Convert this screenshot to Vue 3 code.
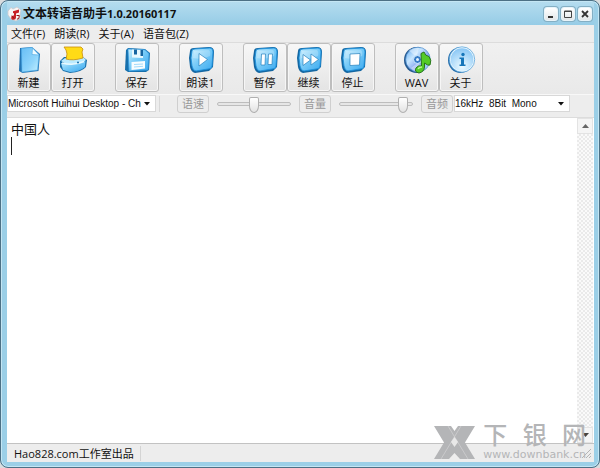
<script setup>
import { ref } from 'vue'

const menus = ['文件(F)', '朗读(R)', '关于(A)', '语音包(Z)']
const groups = [
  [{ icon: 'new', label: '新建' }, { icon: 'open', label: '打开' }],
  [{ icon: 'save', label: '保存' }],
  [{ icon: 'play', label: '朗读1' }],
  [{ icon: 'pause', label: '暂停' }, { icon: 'next', label: '继续' }, { icon: 'stop', label: '停止' }],
  [{ icon: 'wav', label: 'WAV' }, { icon: 'info', label: '关于' }],
]
const tiles = ['play', 'pause', 'next', 'stop']
const content = ref('中国人\n')
const speed = ref(50)
const volume = ref(93)
</script>

<template>
  <div class="window">
    <svg class="defs" width="0" height="0" aria-hidden="true">
      <defs>
        <linearGradient id="blue" x1="0" y1="0" x2="1" y2="1">
          <stop offset="0" stop-color="#c9efff" /><stop offset=".45" stop-color="#7accf8" /><stop offset="1" stop-color="#3aa8ef" />
        </linearGradient>
        <linearGradient id="page" x1="0" y1="0" x2="1" y2="1">
          <stop offset="0" stop-color="#68bff5" /><stop offset=".6" stop-color="#8fd5fb" /><stop offset="1" stop-color="#c4f0ff" />
        </linearGradient>
        <linearGradient id="disc" x1="0" y1="0" x2="1" y2="1">
          <stop offset="0" stop-color="#5fa8ee" /><stop offset=".35" stop-color="#c7e6ff" /><stop offset=".6" stop-color="#8aa9ee" /><stop offset="1" stop-color="#b2e9ff" />
        </linearGradient>
        <radialGradient id="glass" cx=".5" cy=".8" r=".8">
          <stop offset="0" stop-color="#ecfaff" /><stop offset="1" stop-color="#84c4f5" />
        </radialGradient>
      </defs>
    </svg>

    <header class="titlebar">
      <svg class="logo" width="15" height="16" viewBox="0 0 15 16" aria-hidden="true">
        <path d="M1 5 4 1.5 6 3 10 1l4 3-1 5 1 3-5 3-5-2-3-4z" fill="#f7f5f5" stroke="#c9c5c8" stroke-width=".7" />
        <path d="M6 5.2 12 3.6v3L9 7.4v4.2a2.4 2.1 0 1 1-2-2V7L6 7.2z" fill="#c82025" />
        <path d="M9.5 9.5h2.8l-.4 3-2 .7M4.5 10l2.8 2.4" stroke="#941317" fill="none" />
      </svg>
      <h1>文本转语音助手<span class="version">1.0.20160117</span></h1>
      <div class="controls">
        <button type="button" aria-label="最小化"><svg width="12" height="12"><path d="M3 8h5v2H3z" fill="#333" /></svg></button>
        <button type="button" aria-label="最大化"><svg width="12" height="12"><path d="M2.5 3h7v6.500h-7zM2.500 3.500h7" fill="none" stroke="#444" /></svg></button>
        <button type="button" aria-label="关闭"><svg width="12" height="12"><path d="m3 3 6 6M9 3 3 9" stroke="#333" stroke-width="1.800" /></svg></button>
      </div>
    </header>

    <main class="client">
      <nav class="menu">
        <button v-for="m in menus" :key="m" type="button">{{ m }}</button>
      </nav>

      <div class="toolbar">
        <div v-for="(group, g) in groups" :key="g" class="group">
          <button v-for="tool in group" :key="tool.label" type="button" class="tool">
            <svg width="30" height="30" viewBox="0 0 30 30" aria-hidden="true">
              <g v-if="tool.icon === 'new'">
                <path d="M6 3 18 2l8 7-1.500 17-16 2-3.500-2z" fill="#2476b4" />
                <path d="M7.500 3.500 18 2.600 25 9.500 23.500 25 8 27z" fill="url(#page)" stroke="#55b4ef" stroke-width=".6" />
                <path d="M18.500 3 18 9.500l7 .5z" fill="#effbff" stroke="#59aee4" stroke-width=".7" />
              </g>
              <g v-else-if="tool.icon === 'open'">
                <path d="M2 16 6 12 25 12 29 15 28 22Q24 27 12 28L5 26 2 22z" fill="#196faa" />
                <path d="M3 16 7 13 25 12 28 15Q23 21 10 20z" fill="#bcebff" />
                <path d="M8 5 6 2 23 2 25 4 24 7 25 13Q15 16 8 14L9 9z" fill="#ffdb16" stroke="#c98d08" stroke-width=".8" />
                <path d="M3 18Q13 21 27.500 16L27 22Q21 27 12 27L5 25z" fill="url(#blue)" />
                <path d="M4 18Q16 21 26 16.500" fill="none" stroke="#eafaff" stroke-width="1.500" />
                <circle cx="20" cy="17.500" r="1" fill="#186eaa" />
              </g>
              <g v-else-if="tool.icon === 'save'">
                <path d="M4 5 6 3 23 4 28 8 27 25 24 27 6 27 3 25z" fill="#1770ac" />
                <path d="M6 4 23 4.800 27 8.500 26 25 7 26z" fill="url(#blue)" stroke="#329ae0" stroke-width=".7" />
                <path d="M10 4.500 21 5V13L10 12.500z" fill="#e9f8ff" />
                <path d="M12 4.500h3v5h-3zM18.500 5h2.500v6h-2.500z" fill="#1765a2" />
                <path d="M9.500 17 23 16v7.500L9.500 25z" fill="#f7fdff" />
                <path d="M12 19.500 21 19M12 22 21 21.300" stroke="#a3dafa" />
              </g>
              <g v-else-if="tiles.includes(tool.icon)">
                <path d="M4 6Q4 3 8 3L23 2Q28 2 28 7L27 22 23 26 9 28Q5 27 4 22L3 13z" fill="#1467a2" />
                <path d="M6 6Q6 4 9 4L24 3Q27 3 27 7L26 21Q26 24 22 24L10 26Q7 26 6 21L5 13z" fill="url(#blue)" stroke="#1f92dc" stroke-width=".9" />
                <path d="M8 6 23 5Q25 7 24 11 16 15 7 13z" fill="#fff" opacity=".25" />
                <g fill="#fff" stroke="#2681bd" stroke-width=".7">
                  <path v-if="tool.icon === 'play'" d="M13 8.500 21.500 14.500 13 21z" />
                  <path v-if="tool.icon === 'pause'" d="M11.500 9h4l-.5 11h-4zM18.500 9h4L22 19.500h-4z" />
                  <path v-if="tool.icon === 'next'" d="M9 9.500 16.500 15 9 20.500zM17 9 24.500 14.500 17 20z" />
                  <path v-if="tool.icon === 'stop'" d="M12 9 22 8.500 21.500 20 12 20.500z" />
                </g>
              </g>
              <g v-else-if="tool.icon === 'wav'">
                <ellipse cx="14.500" cy="15" rx="12.500" ry="13" fill="#265a91" />
                <circle cx="16" cy="14.500" r="12.300" fill="url(#disc)" stroke="#4c8dcb" stroke-width=".7" />
                <path d="M14.500 12 7 5.500Q12 2 17 3zM17 17 18 26Q12 27 9 23z" fill="#fff" opacity=".4" />
                <circle cx="15.500" cy="14.500" r="4" fill="#367bc6" stroke="#d6efff" />
                <circle cx="15.500" cy="14.500" r="1.500" fill="#e8f6ff" />
                <path d="M19 8.500 22 7Q23 11 27 11.500 30 15 28 20 26 21 22.500 18V22Q22 27 17 28 12 27 14 23 16 20 19.500 21z" fill="#54cb27" stroke="#28751c" />
                <path d="M16 24Q17 22 20 22" fill="none" stroke="#b7f68b" stroke-width="1.500" />
              </g>
              <g v-else>
                <ellipse cx="14.500" cy="15" rx="12.500" ry="13" fill="#286fac" />
                <circle cx="16" cy="14.500" r="12" fill="url(#glass)" stroke="#eaf8ff" stroke-width="1.300" />
                <circle cx="16" cy="14.500" r="12.700" fill="none" stroke="#4a9bd6" stroke-width=".7" />
                <circle cx="17" cy="9.500" r="1.700" fill="#1676ba" />
                <path d="M13.500 12.500h4.500v7h1.500v1.500h-6v-1.500h1.500v-5.500h-1.500z" fill="#1676ba" />
              </g>
            </svg>
            <span>{{ tool.label }}</span>
          </button>
        </div>
      </div>

      <div class="options">
        <div class="combo voice">
          <select aria-label="语音"><option>Microsoft Huihui Desktop - Chinese</option></select>
          <svg width="7" height="4" aria-hidden="true"><path d="M0 0h6L3 3.500z" fill="#111" /></svg>
        </div>
        <i class="divider"></i>
        <div class="sliders">
          <label class="tag" for="speed">语速</label>
          <input id="speed" v-model="speed" type="range" min="0" max="100">
          <label class="tag" for="volume">音量</label>
          <input id="volume" v-model="volume" type="range" min="0" max="100">
          <label class="tag" for="rate">音频</label>
        </div>
        <div class="combo rate">
          <select id="rate"><option>16kHz&nbsp; 8Bit&nbsp; Mono</option></select>
          <svg width="7" height="4" aria-hidden="true"><path d="M0 0h6L3 3.500z" fill="#111" /></svg>
        </div>
      </div>

      <section class="editor">
        <textarea v-model="content" aria-label="文本" spellcheck="false"></textarea>
        <i class="caret"></i>
        <div class="scrollbar">
          <button type="button" aria-label="向上滚动"><svg width="7" height="4"><path d="M0 4h7L3.500 0z" fill="#666" /></svg></button>
          <button type="button" aria-label="向下滚动"><svg width="7" height="4"><path d="M0 0h7L3.500 4z" fill="#444" /></svg></button>
        </div>
      </section>

      <footer class="status">
        <span>Hao828.com工作室出品</span>
        <svg width="11" height="11" aria-hidden="true"><path d="M1 10 10 1M5 10l5-5M8 10l2-2" stroke="#b5b5b5" /></svg>
      </footer>
    </main>

    <div class="watermark">
      <svg width="41" height="33" viewBox="0 0 41 33" aria-hidden="true">
        <path d="M0 0h17l3.500 5L24 0h17L31 16.500 41 33H26l-5.500-6L15 33H0l10-16.500z" />
        <path d="M14 0 34 33M27 0 7 33" stroke="#cfcfd0" stroke-width=".8" />
        <path d="M20.500 11 24 16l-3.500 5L17 16z" fill="#e8e8e8" />
      </svg>
      <div class="brand">
        <div class="name"><span>下</span><span>银</span><span>网</span></div>
        <div class="url">www.downbank.cn</div>
      </div>
    </div>
  </div>
</template>

<style>
body { margin: 0; background: #d9dcde; }
</style>

<style scoped>
* { box-sizing: border-box; }
.window {
  position: relative;
  display: flex;
  flex-direction: column;
  min-height: 100vh;
  padding: 0 5px 5px 6px;
  border: 1px solid #4c7085;
  border-radius: 8px;
  background: #9bcfe7;
  box-shadow: inset 0 0 0 1px #c4e6f4;
  font-family: "Open Sans", "Noto Sans CJK SC", sans-serif;
  font-size: 11px;
  color: #111;
}
.defs { position: absolute; }
button {
  margin: 0;
  padding: 0;
  border: 0;
  background: none;
  font: inherit;
  color: inherit;
}
.titlebar {
  display: flex;
  align-items: center;
  height: 23px;
  background: linear-gradient(#b4dcef, #96cce6);
  margin-top: 1px;
}
h1 {
  flex: 1;
  margin: 0 0 0 1px;
  font-size: 12px;
  font-weight: 700;
  line-height: 16px;
  white-space: nowrap;
}
.version { font-size: 11px; }
.controls { display: flex; gap: 3px; padding-right: 2px; }
.controls button {
  display: flex;
  align-items: center;
  justify-content: center;
  width: 14px;
  height: 14px;
  border: 1px solid #e9f4f9;
  border-radius: 3px;
  background: linear-gradient(#fff, #e3e7e9);
  box-shadow: 0 0 0 1px #84afc4;
}
.controls svg { flex: none; }
.client {
  flex: 1;
  display: flex;
  flex-direction: column;
  background: #ededed;
}
.menu {
  display: flex;
  gap: 9px;
  height: 17px;
  padding: 0 4px;
  line-height: 17px;
}
.toolbar {
  display: flex;
  gap: 20px;
  height: 52px;
  border-top: 1px solid #dcdcdc;
  background: linear-gradient(#f0f0f0, #e9e9e9);
}
.group { display: flex; }
.tool {
  display: flex;
  flex-direction: column;
  align-items: center;
  width: 44px;
  height: 49px;
  padding: 1px 1px 0 0;
  border: 1px solid #bebebe;
  border-radius: 3px;
  background: linear-gradient(#f7f7f7, #e4e4e4);
  box-shadow: inset 0 0 0 1px #f6f6f6;
}
.tool svg { flex: none; }
.tool span { line-height: 16px; }
.options {
  display: flex;
  align-items: center;
  height: 24px;
  padding-bottom: 5px;
  border-top: 1px solid #f8f8f8;
  border-bottom: 1px solid #dcdcdc;
}
.combo {
  display: grid;
  align-items: center;
  height: 17px;
  border: 1px solid #d8d8d8;
  background: #fff;
}
.combo > * { grid-area: 1 / 1; }
.combo svg { justify-self: end; margin-right: 4px; pointer-events: none; }
.combo select {
  width: 100%;
  min-width: 0;
  height: 15px;
  padding: 0 14px 0 0;
  border: 0;
  appearance: none;
  background: none;
  font: 10px/15px "Liberation Sans", sans-serif;
  color: #111;
}
.voice { width: 149px; }
.rate { width: 116px; }
.divider { width: 1px; height: 16px; margin: 0 17px 0 3px; background: #d8d8d8; }
.sliders { display: flex; align-items: center; gap: 8px; margin-right: 1px; }
.tag {
  width: 32px;
  height: 18px;
  border: 1px solid #cfcfcf;
  border-radius: 3px;
  text-align: center;
  line-height: 16px;
  color: #999;
}
input[type="range"] {
  width: 74px;
  height: 17px;
  margin: 0;
  appearance: none;
  background: none;
}
input[type="range"]::-webkit-slider-runnable-track {
  height: 4px;
  border: 1px solid #bdbdbd;
  border-radius: 2px;
  background: #e6e6e6;
}
input[type="range"]::-webkit-slider-thumb {
  appearance: none;
  width: 10px;
  height: 16px;
  margin-top: -6px;
  border: 1px solid #b0b0b0;
  border-radius: 2px 2px 5px 5px / 2px 2px 7px 7px;
  background: linear-gradient(#fff, #e3e3e3);
}
.editor {
  position: relative;
  flex: 1;
  display: flex;
  min-height: 120px;
  padding-right: 1px;
  border-bottom: 1px solid #c2c2c2;
  background: #fff;
}
textarea {
  flex: 1;
  min-width: 0;
  padding: 2px 4px;
  border: 0;
  outline: 0;
  resize: none;
  background: #fff;
  font: 13px/17px "Noto Sans CJK SC", sans-serif;
  color: #111;
}
.caret {
  position: absolute;
  left: 4px;
  top: 19px;
  width: 1px;
  height: 18px;
  background: #222;
}
.scrollbar {
  display: flex;
  flex-direction: column;
  justify-content: space-between;
  width: 16px;
  background: repeating-conic-gradient(#eaeaea 0 25%, #fafafa 0 50%) 0 0 / 4px 4px;
}
.scrollbar button {
  display: flex;
  align-items: center;
  justify-content: center;
  height: 16px;
  border: 1px solid #e3e3e3;
  background: #f5f5f5;
}
.status {
  display: flex;
  align-items: center;
  justify-content: space-between;
  height: 18px;
  padding: 0 2px 0 7px;
}
.status span {
  padding-right: 6px;
  border-right: 1px solid #d4d4d4;
  line-height: 15px;
}
.watermark {
  position: absolute;
  right: 13px;
  bottom: 6px;
  display: flex;
  align-items: center;
  gap: 8px;
  color: #b4b5b7;
  pointer-events: none;
}
.watermark svg { fill: #b4b5b7; }
.name {
  display: flex;
  justify-content: space-between;
  font: 500 24px/24px "Liberation Sans", "Noto Sans CJK SC", sans-serif;
}
.url { font: 11px/13px "DejaVu Sans", sans-serif; }
</style>
